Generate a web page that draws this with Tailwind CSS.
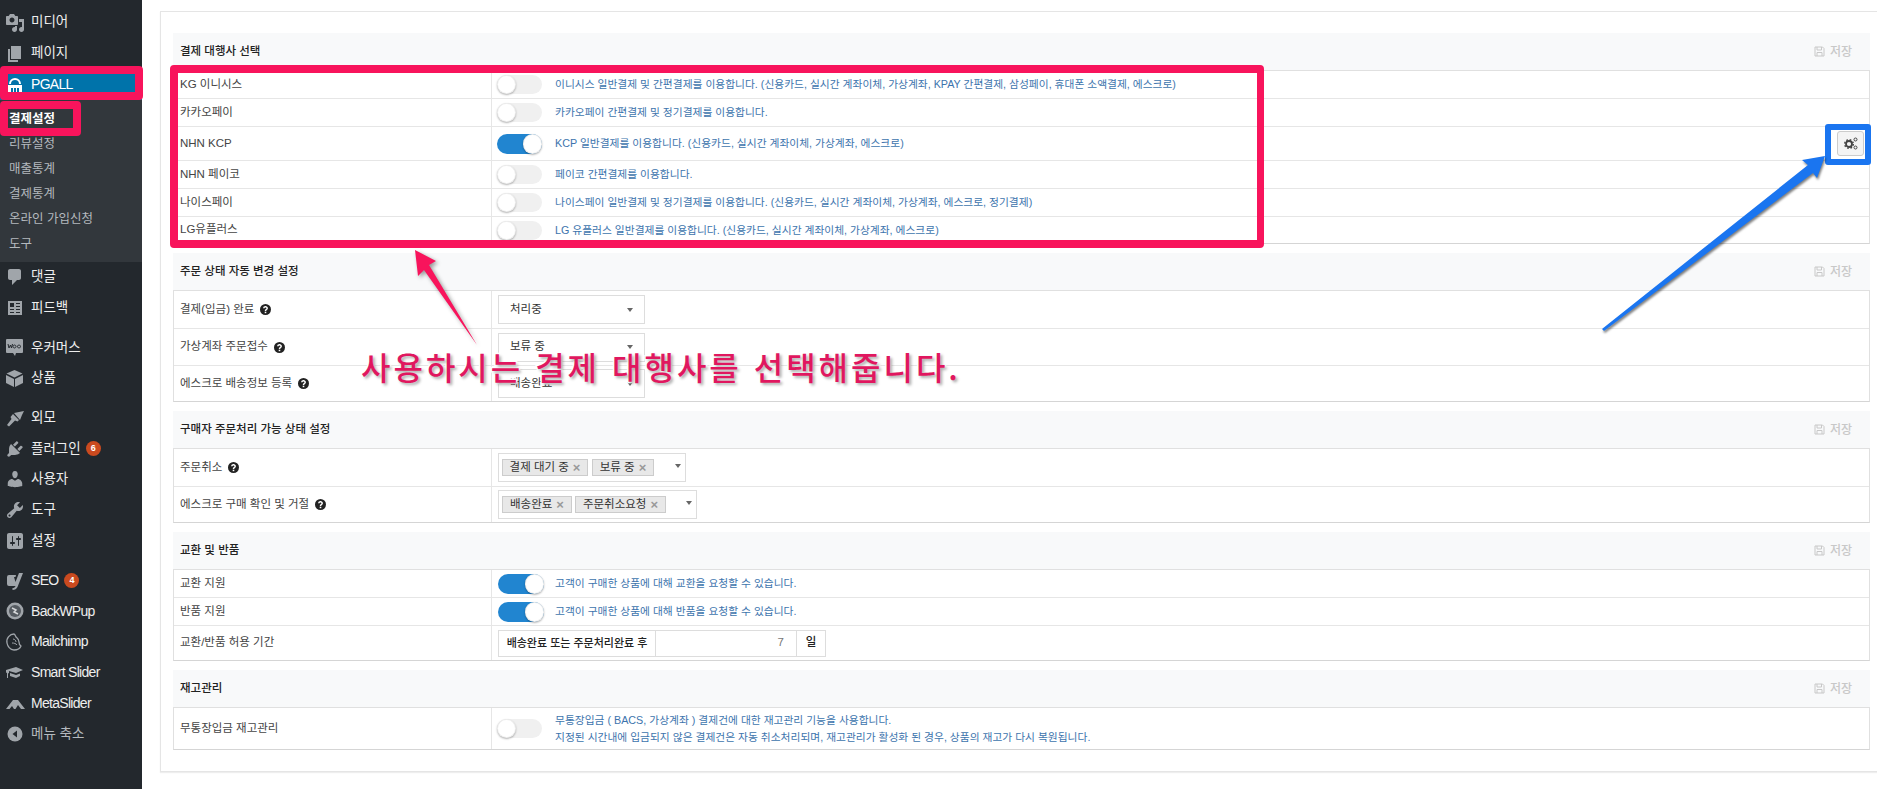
<!DOCTYPE html>
<html lang="ko">

<head>
    <meta charset="UTF-8">
    <title>결제설정 - PGALL</title>
    <script src="https://cdn.jsdelivr.net/npm/@tailwindcss/browser@4"></script>
</head>

<body class="relative h-[789px] overflow-hidden bg-white font-['Liberation_Sans','Noto_Sans_CJK_KR',sans-serif] text-[11.5px] text-[#444]">
    <div class="flex h-full">
        <!-- sidebar -->
        <aside class="w-[142px] shrink-0 bg-[#23282d] pt-[7px] text-[13.5px] text-[#eee]">
            <a class="flex h-[31px] items-center"><svg class="ml-[5px] mr-[6px] h-[20px] w-[20px] fill-[#a0a5aa]" viewBox="0 0 20 20"><path fill-rule="evenodd" d="M13 11V4c0-.55-.45-1-1-1h-1.670L9 1H5L3.670 3H2c-.55 0-1 .45-1 1v7c0 .55.45 1 1 1h10c.55 0 1-.45 1-1zM7 4.500c1.380 0 2.500 1.120 2.500 2.500S8.380 9.500 7 9.500 4.500 8.380 4.500 7 5.620 4.500 7 4.500zM14 6h5v10.500c0 1.380-1.120 2.500-2.500 2.500S14 17.880 14 16.500s1.120-2.500 2.500-2.500c.17 0 .34.020.5.050V9h-3V6zm-4 8.050V13h2v3.500c0 1.380-1.120 2.500-2.500 2.500S7 17.880 7 16.500 8.120 14 9.500 14c.17 0 .34.020.5.050z"/></svg>미디어</a>
            <a class="flex h-[31px] items-center"><svg class="ml-[5px] mr-[6px] h-[20px] w-[20px] fill-[#a0a5aa]" viewBox="0 0 20 20"><path d="M6 15V2h10v13H6zm-1 1h8v2H3V5h2v11z"/></svg>페이지</a>
            <a class="flex h-[31px] items-center bg-[#0073aa] text-[14px] tracking-[-0.7px] text-white"><svg class="ml-[8px] mr-[9px] h-[14px] w-[14px] fill-white" viewBox="0 0 14 14"><path d="M7 0a6 6 0 0 1 6 6h-2a4 4 0 0 0-8 0H1a6 6 0 0 1 6-6zM0 7h14v7h-3v-4H9v4H8v-4H6v4H5v-4H3v4H0z"/></svg>PGALL</a>
            <div class="h-[162px] bg-[#32373c] pt-[7px] text-[12.5px] text-[#b4b9be]">
                <a class="flex h-[25px] items-center pl-[9px] font-bold text-white">결제설정</a>
                <a class="flex h-[25px] items-center pl-[9px]">리뷰설정</a>
                <a class="flex h-[25px] items-center pl-[9px]">매출통계</a>
                <a class="flex h-[25px] items-center pl-[9px]">결제통계</a>
                <a class="flex h-[25px] items-center pl-[9px]">온라인 가입신청</a>
                <a class="flex h-[25px] items-center pl-[9px]">도구</a>
            </div>
            <a class="flex h-[30.700px] items-center"><svg class="ml-[5px] mr-[6px] h-[20px] w-[20px] fill-[#a0a5aa]" viewBox="0 0 20 20"><path d="M5 2h9c1.100 0 2 .9 2 2v7c0 1.100-.9 2-2 2h-2l-5 5v-5H5c-1.100 0-2-.9-2-2V4c0-1.100.9-2 2-2z"/></svg>댓글</a>
            <a class="flex h-[30.700px] items-center"><svg class="ml-[7px] mr-[8px] h-[16px] w-[16px] fill-[#a0a5aa]" viewBox="0 0 16 16"><path fill-rule="evenodd" d="M1 1h14v14H1zM3 3v4h4V3zM9 3v1h4V3zM9 6v1h4V6zM3 9v1h4V9zM9 9v1h4V9zM3 12v1h4v-1zM9 12v1h4v-1z"/></svg>피드백</a>
            <a class="mt-[9px] flex h-[30.700px] items-center"><svg class="ml-[5px] mr-[7px] h-[19px] w-[19px]" viewBox="0 0 19 19"><path fill="#a0a5aa" d="M2 1h15a1 1 0 0 1 1 1v12a1 1 0 0 1-1 1h-6l-1 3-2-3H2a1 1 0 0 1-1-1V2a1 1 0 0 1 1-1z"/><path fill="none" stroke="#23282d" d="M3 6l1 4 1.500-3 1 3 1-4M9.500 7a1.500 1.500 0 1 0 .01 0M14 7a1.500 1.500 0 1 0 .01 0"/></svg>우커머스</a>
            <a class="flex h-[30.700px] items-center"><svg class="ml-[5px] mr-[7px] h-[19px] w-[19px] fill-[#a0a5aa]" viewBox="0 0 19 19"><path d="M9.500 1l8 3.500-8 4-8-4z"/><path d="M1 6l8 4v8l-8-4zM18 6l-8 4v8l8-4z"/></svg>상품</a>
            <a class="mt-[9px] flex h-[30.700px] items-center"><svg class="ml-[6px] mr-[7px] h-[18px] w-[18px] fill-[#a0a5aa]" viewBox="0 0 18 18"><path d="M8 4l5-1 5-1-2 4-2 5z"/><path d="M7 5l6 6-1.500 1.500L9 11.500 7.500 13 3 17.500 1 16 4 12l1.500-2L4.500 8z"/></svg>외모</a>
            <a class="flex h-[30.700px] items-center"><svg class="ml-[5px] mr-[6px] h-[20px] w-[20px] fill-[#a0a5aa]" viewBox="0 0 20 20"><path d="M13.110 4.360L9.870 7.600 8 5.730l3.240-3.240c.35-.34 1.050-.2 1.560.32.52.51.66 1.210.31 1.550zm-8 1.770l.91-1.120 9.010 9.010-1.190.84c-.71.71-2.630 1.160-3.820 1.160H6.140L4.900 17.260c-.59.59-1.540.59-2.120 0-.59-.58-.59-1.530 0-2.120l1.240-1.240v-3.880c0-1.130.4-3.190 1.090-3.890zm7.260 3.970l3.240-3.240c.34-.35 1.040-.21 1.550.31.52.51.66 1.210.31 1.550l-3.240 3.250z"/></svg>플러그인<span class="ml-[5px] flex h-[15px] w-[15px] items-center justify-center rounded-full bg-[#ca4a1f] text-[9px] font-bold text-white">6</span></a>
            <a class="flex h-[30.700px] items-center"><svg class="ml-[5px] mr-[6px] h-[20px] w-[20px] fill-[#a0a5aa]" viewBox="0 0 20 20"><path d="M10 9.250c-2.270 0-2.730-3.440-2.730-3.440C7 4.020 7.820 2 9.970 2c2.160 0 2.980 2.020 2.710 3.810 0 0-.41 3.440-2.680 3.440zm0 2.570L12.720 10c2.390 0 4.520 2.330 4.520 4.530v2.490s-3.650 1.130-7.240 1.130c-3.650 0-7.240-1.130-7.240-1.130v-2.490c0-2.250 1.940-4.480 4.470-4.480z"/></svg>사용자</a>
            <a class="flex h-[30.700px] items-center"><svg class="ml-[5px] mr-[6px] h-[20px] w-[20px] fill-[#a0a5aa]" viewBox="0 0 20 20"><path fill-rule="evenodd" d="M16.680 9.770c-1.340 1.340-3.300 1.670-4.950.99l-5.410 6.520c-.99.99-2.590.99-3.580 0s-.99-2.590 0-3.570l6.520-5.420c-.68-1.650-.35-3.610.99-4.950 1.280-1.280 3.120-1.620 4.720-1.060l-2.890 2.890 2.820 2.820 2.860-2.870c.53 1.580.18 3.390-1.080 4.670zM3.810 16.210c.4.39 1.040.39 1.430 0 .4-.4.4-1.040 0-1.430-.39-.4-1.030-.4-1.430 0-.39.39-.39 1.030 0 1.430z"/></svg>도구</a>
            <a class="flex h-[30.700px] items-center"><svg class="ml-[5px] mr-[6px] h-[20px] w-[20px] fill-[#a0a5aa]" viewBox="0 0 20 20"><path fill-rule="evenodd" d="M18 16V4c0-1.100-.9-2-2-2H4c-1.100 0-2 .9-2 2v12c0 1.100.9 2 2 2h12c1.100 0 2-.9 2-2zM8 11h1c.55 0 1 .45 1 1s-.45 1-1 1H8v1.500c0 .28-.22.5-.5.5s-.5-.22-.5-.5V13H6c-.55 0-1-.45-1-1s.45-1 1-1h1V5.500c0-.28.22-.5.5-.5s.5.22.5.5V11zm5-2h-1c-.55 0-1-.45-1-1s.45-1 1-1h1V5.500c0-.28.22-.5.5-.5s.5.22.5.5V7h1c.55 0 1 .45 1 1s-.45 1-1 1h-1v5.500c0 .28-.22.5-.5.5s-.5-.22-.5-.5V9z"/></svg>설정</a>
            <a class="mt-[9px] flex h-[30.700px] items-center text-[14px] tracking-[-0.7px]"><svg class="ml-[6px] mr-[7px] h-[18px] w-[18px] fill-[#a0a5aa]" viewBox="0 0 18 18"><path d="M3 3h7l-.5 2H8l1.500 5L13 1h4l-5.500 14c-1 2-2.500 3-5 3v-2c1.500 0 2.500-.5 3-2H3a2 2 0 0 1-2-2V5a2 2 0 0 1 2-2z"/></svg>SEO<span class="ml-[6px] flex h-[15px] w-[15px] items-center justify-center rounded-full bg-[#ca4a1f] text-[9px] font-bold tracking-normal text-white">4</span></a>
            <a class="flex h-[30.700px] items-center text-[14px] tracking-[-0.7px]"><svg class="ml-[6px] mr-[7px] h-[18px] w-[18px]" viewBox="0 0 18 18"><circle cx="9" cy="9" r="8.500" fill="#a0a5aa"/><circle cx="9" cy="9" r="6" fill="#555b61"/><path fill="none" stroke="#d5d7d9" stroke-width="1.500" d="M6 6l4 2-2 2 4 2"/></svg>BackWPup</a>
            <a class="flex h-[30.700px] items-center text-[14px] tracking-[-0.7px]"><svg class="ml-[5px] mr-[8px] h-[18px] w-[18px] fill-none stroke-[#a0a5aa]" viewBox="0 0 18 18"><path stroke-width="1.300" d="M9 1C5 1 1 5 2 10c.5 3 3 7 7 7 3 0 6-1.500 7-4-1-.5-2-2-2-4 0-3-2-4-3-5-.5-1-1-3-2-3z"/><path d="M8 6c2 0 3 2 3 3M7 10c2 0 4 .5 5 2"/></svg>Mailchimp</a>
            <a class="flex h-[30.700px] items-center text-[14px] tracking-[-0.7px]"><svg class="ml-[5px] mr-[7px] h-[19px] w-[19px] fill-[#a0a5aa]" viewBox="0 0 19 19"><path d="M1 7l10-3 7 3-7 3-7-2v2l-1 .5V15H2v-5l-1-.5z"/><path d="M5 10l6 2 4-1.500V13l-4 2-6-2z"/></svg>Smart Slider</a>
            <a class="flex h-[30.700px] items-center text-[14px] tracking-[-0.7px]"><svg class="ml-[6px] mr-[6px] h-[19px] w-[19px] fill-[#a0a5aa]" viewBox="0 0 19 19"><path d="M0 15L7 6h5l7 9h-4l-3-4-2.500 4H8l-2-3-2.500 3z"/></svg>MetaSlider</a>
            <a class="flex h-[30.700px] items-center text-[#b4b9be]"><svg class="ml-[7px] mr-[8px] h-[16px] w-[16px]" viewBox="0 0 16 16"><circle cx="8" cy="8" r="7.500" fill="#a0a5aa"/><path fill="#23282d" d="M10 4.500v7L5.500 8z"/></svg>메뉴 축소</a>
        </aside>

        <!-- content -->
        <main class="flex-1 pl-[18px] pt-[11px]">
            <div class="h-[761px] border border-r-0 border-[#e5e5e5] pl-[12px] pr-[7px] pt-[21px] shadow-[0_1px_1px_#eee]">

                <!-- 결제 대행사 선택 -->
                <section class="mb-[9px]">
                    <div class="flex h-[37px] items-center justify-between bg-[#f8f9fa] pl-[7px] font-medium text-[#222]">
                        <span>결제 대행사 선택</span>
                        <span class="mr-[6px] flex h-[29px] w-[62px] items-center justify-center gap-[5px] text-[12px] text-[#c8c8c8]"><svg class="h-[11px] w-[11px] fill-none stroke-[#c8c8c8]" viewBox="0 0 11 11"><path d="M1 1h7.500L10 2.500V10H1zM3 1v3h4.500V1M3 10V6.500h5V10"/></svg>저장</span>
                    </div>
                    <div class="border border-[#e0e0e0] border-b-[#d5d5d5]">
                        <div class="flex h-[28px] border-b border-[#e6e6e6]">
                            <div class="flex w-[318px] items-center border-r border-[#e6e6e6] pl-[6px]">KG 이니시스</div>
                            <div class="flex flex-1 items-center pl-[5px]">
                                <span class="relative h-[19px] w-[45px] rounded-full bg-[#f0f0f0]"><span class="absolute top-0 left-0 h-[19px] w-[19px] rounded-full bg-white shadow-[0_1px_2px_#0000004d,inset_0_0_0_1px_#00000012]"></span></span>
                                <span class="ml-[13px] text-[10.75px] text-[#3d74ad]">이니시스 일반결제 및 간편결제를 이용합니다. (신용카드, 실시간 계좌이체, 가상계좌, KPAY 간편결제, 삼성페이, 휴대폰 소액결제, 에스크로)</span>
                            </div>
                        </div>
                        <div class="flex h-[28px] border-b border-[#e6e6e6]">
                            <div class="flex w-[318px] items-center border-r border-[#e6e6e6] pl-[6px]">카카오페이</div>
                            <div class="flex flex-1 items-center pl-[5px]">
                                <span class="relative h-[19px] w-[45px] rounded-full bg-[#f0f0f0]"><span class="absolute top-0 left-0 h-[19px] w-[19px] rounded-full bg-white shadow-[0_1px_2px_#0000004d,inset_0_0_0_1px_#00000012]"></span></span>
                                <span class="ml-[13px] text-[10.75px] text-[#3d74ad]">카카오페이 간편결제 및 정기결제를 이용합니다.</span>
                            </div>
                        </div>
                        <div class="flex h-[34px] border-b border-[#e6e6e6]">
                            <div class="flex w-[318px] items-center border-r border-[#e6e6e6] pl-[6px]">NHN KCP</div>
                            <div class="flex flex-1 items-center pl-[5px]">
                                <span class="relative h-[20px] w-[45px] rounded-full bg-[#2185d0]"><span class="absolute top-0 right-0 h-[20px] w-[19px] rounded-full bg-white shadow-[0_1px_2px_#0000004d,inset_0_0_0_1px_#00000012]"></span></span>
                                <span class="ml-[13px] text-[10.75px] text-[#3d74ad]">KCP 일반결제를 이용합니다. (신용카드, 실시간 계좌이체, 가상계좌, 에스크로)</span>
                                <button class="mr-[5px] ml-auto flex h-[25px] w-[27px] items-center justify-center rounded-[3px] border border-[#ccc] bg-[#f4f4f4]"><svg class="h-[13px] w-[14px] fill-none stroke-[#444]" viewBox="0 0 14 13"><circle cx="5" cy="7" r="3" stroke-width="1.800"/><circle cx="5" cy="7" r="4.300" stroke-width="1.400" stroke-dasharray="1.700 1.700"/><circle cx="11.500" cy="2.500" r="1.500"/><circle cx="11.500" cy="10.500" r="1.500"/></svg></button>
                            </div>
                        </div>
                        <div class="flex h-[28px] border-b border-[#e6e6e6]">
                            <div class="flex w-[318px] items-center border-r border-[#e6e6e6] pl-[6px]">NHN 페이코</div>
                            <div class="flex flex-1 items-center pl-[5px]">
                                <span class="relative h-[19px] w-[45px] rounded-full bg-[#f0f0f0]"><span class="absolute top-0 left-0 h-[19px] w-[19px] rounded-full bg-white shadow-[0_1px_2px_#0000004d,inset_0_0_0_1px_#00000012]"></span></span>
                                <span class="ml-[13px] text-[10.75px] text-[#3d74ad]">페이코 간편결제를 이용합니다.</span>
                            </div>
                        </div>
                        <div class="flex h-[28px] border-b border-[#e6e6e6]">
                            <div class="flex w-[318px] items-center border-r border-[#e6e6e6] pl-[6px]">나이스페이</div>
                            <div class="flex flex-1 items-center pl-[5px]">
                                <span class="relative h-[19px] w-[45px] rounded-full bg-[#f0f0f0]"><span class="absolute top-0 left-0 h-[19px] w-[19px] rounded-full bg-white shadow-[0_1px_2px_#0000004d,inset_0_0_0_1px_#00000012]"></span></span>
                                <span class="ml-[13px] text-[10.75px] text-[#3d74ad]">나이스페이 일반결제 및 정기결제를 이용합니다. (신용카드, 실시간 계좌이체, 가상계좌, 에스크로, 정기결제)</span>
                            </div>
                        </div>
                        <div class="flex h-[26px]">
                            <div class="flex w-[318px] items-center border-r border-[#e6e6e6] pl-[6px]">LG유플러스</div>
                            <div class="flex flex-1 items-center pl-[5px]">
                                <span class="relative h-[19px] w-[45px] rounded-full bg-[#f0f0f0]"><span class="absolute top-0 left-0 h-[19px] w-[19px] rounded-full bg-white shadow-[0_1px_2px_#0000004d,inset_0_0_0_1px_#00000012]"></span></span>
                                <span class="ml-[13px] text-[10.75px] text-[#3d74ad]">LG 유플러스 일반결제를 이용합니다. (신용카드, 실시간 계좌이체, 가상계좌, 에스크로)</span>
                            </div>
                        </div>
                    </div>
                </section>

                <!-- 주문 상태 자동 변경 설정 -->
                <section class="mb-[9px]">
                    <div class="flex h-[37px] items-center justify-between bg-[#f8f9fa] pl-[7px] font-medium text-[#222]">
                        <span>주문 상태 자동 변경 설정</span>
                        <span class="mr-[6px] flex h-[29px] w-[62px] items-center justify-center gap-[5px] text-[12px] text-[#c8c8c8]"><svg class="h-[11px] w-[11px] fill-none stroke-[#c8c8c8]" viewBox="0 0 11 11"><path d="M1 1h7.500L10 2.500V10H1zM3 1v3h4.500V1M3 10V6.500h5V10"/></svg>저장</span>
                    </div>
                    <div class="border border-[#e0e0e0] border-b-[#d5d5d5]">
                        <div class="flex h-[38px] border-b border-[#e6e6e6]">
                            <div class="flex w-[318px] items-center border-r border-[#e6e6e6] pl-[6px]">결제(입금) 완료<svg class="ml-[6px] h-[11px] w-[11px]" viewBox="0 0 11 11"><circle cx="5.500" cy="5.500" r="5.500" fill="#222"/><path fill="none" stroke="#fff" stroke-width="1.500" d="M3.800 4.300a1.700 1.500 0 1 1 2.500 1.300c-.6.3-.8.6-.8 1.300"/><path fill="#fff" d="M4.700 7.700h1.600v1.500H4.700z"/></svg></div>
                            <div class="flex flex-1 items-center pl-[6px]">
                                <span class="flex h-[29px] w-[147px] items-center justify-between border border-[#ddd] px-[11px] text-[#333]">처리중<span class="h-0 w-0 border-x-[3.500px] border-t-[4px] border-x-transparent border-t-[#666]"></span></span>
                            </div>
                        </div>
                        <div class="flex h-[37px] border-b border-[#e6e6e6]">
                            <div class="flex w-[318px] items-center border-r border-[#e6e6e6] pl-[6px]">가상계좌 주문접수<svg class="ml-[6px] h-[11px] w-[11px]" viewBox="0 0 11 11"><circle cx="5.500" cy="5.500" r="5.500" fill="#222"/><path fill="none" stroke="#fff" stroke-width="1.500" d="M3.800 4.300a1.700 1.500 0 1 1 2.500 1.300c-.6.3-.8.6-.8 1.300"/><path fill="#fff" d="M4.700 7.700h1.600v1.500H4.700z"/></svg></div>
                            <div class="flex flex-1 items-center pl-[6px]">
                                <span class="flex h-[29px] w-[147px] items-center justify-between border border-[#ddd] px-[11px] text-[#333]">보류 중<span class="h-0 w-0 border-x-[3.500px] border-t-[4px] border-x-transparent border-t-[#666]"></span></span>
                            </div>
                        </div>
                        <div class="flex h-[35px]">
                            <div class="flex w-[318px] items-center border-r border-[#e6e6e6] pl-[6px]">에스크로 배송정보 등록<svg class="ml-[6px] h-[11px] w-[11px]" viewBox="0 0 11 11"><circle cx="5.500" cy="5.500" r="5.500" fill="#222"/><path fill="none" stroke="#fff" stroke-width="1.500" d="M3.800 4.300a1.700 1.500 0 1 1 2.500 1.300c-.6.3-.8.6-.8 1.300"/><path fill="#fff" d="M4.700 7.700h1.600v1.500H4.700z"/></svg></div>
                            <div class="flex flex-1 items-center pl-[6px]">
                                <span class="flex h-[29px] w-[147px] items-center justify-between border border-[#ddd] px-[11px] text-[#333]">배송완료<span class="h-0 w-0 border-x-[3.500px] border-t-[4px] border-x-transparent border-t-[#666]"></span></span>
                            </div>
                        </div>
                    </div>
                </section>

                <!-- 구매자 주문처리 가능 상태 설정 -->
                <section class="mb-[9px]">
                    <div class="flex h-[37px] items-center justify-between bg-[#f8f9fa] pl-[7px] font-medium text-[#222]">
                        <span>구매자 주문처리 가능 상태 설정</span>
                        <span class="mr-[6px] flex h-[29px] w-[62px] items-center justify-center gap-[5px] text-[12px] text-[#c8c8c8]"><svg class="h-[11px] w-[11px] fill-none stroke-[#c8c8c8]" viewBox="0 0 11 11"><path d="M1 1h7.500L10 2.500V10H1zM3 1v3h4.500V1M3 10V6.500h5V10"/></svg>저장</span>
                    </div>
                    <div class="border border-[#e0e0e0] border-b-[#d5d5d5]">
                        <div class="flex h-[38px] border-b border-[#e6e6e6]">
                            <div class="flex w-[318px] items-center border-r border-[#e6e6e6] pl-[6px]">주문취소<svg class="ml-[6px] h-[11px] w-[11px]" viewBox="0 0 11 11"><circle cx="5.500" cy="5.500" r="5.500" fill="#222"/><path fill="none" stroke="#fff" stroke-width="1.500" d="M3.800 4.300a1.700 1.500 0 1 1 2.500 1.300c-.6.3-.8.6-.8 1.300"/><path fill="#fff" d="M4.700 7.700h1.600v1.500H4.700z"/></svg></div>
                            <div class="flex flex-1 items-center pl-[6px]">
                                <span class="flex h-[29px] w-[188px] items-center gap-[4px] border border-[#ddd] pl-[3px] text-[#333]">
                                    <span class="flex h-[17px] w-[86px] shrink-0 items-center justify-center gap-[4px] border border-[#ccc] bg-[#e8e8e8] whitespace-nowrap">결제 대기 중<b class="text-[13px] text-[#999]">×</b></span>
                                    <span class="flex h-[17px] w-[62px] shrink-0 items-center justify-center gap-[4px] border border-[#ccc] bg-[#e8e8e8] whitespace-nowrap">보류 중<b class="text-[13px] text-[#999]">×</b></span>
                                    <span class="mb-[3px] ml-[17px] h-0 w-0 border-x-[3.500px] border-t-[4px] border-x-transparent border-t-[#666]"></span>
                                </span>
                            </div>
                        </div>
                        <div class="flex h-[35px]">
                            <div class="flex w-[318px] items-center border-r border-[#e6e6e6] pl-[6px]">에스크로 구매 확인 및 거절<svg class="ml-[6px] h-[11px] w-[11px]" viewBox="0 0 11 11"><circle cx="5.500" cy="5.500" r="5.500" fill="#222"/><path fill="none" stroke="#fff" stroke-width="1.500" d="M3.800 4.300a1.700 1.500 0 1 1 2.500 1.300c-.6.3-.8.6-.8 1.300"/><path fill="#fff" d="M4.700 7.700h1.600v1.500H4.700z"/></svg></div>
                            <div class="flex flex-1 items-center pl-[6px]">
                                <span class="flex h-[29px] w-[199px] items-center gap-[3px] border border-[#ddd] pl-[3px] text-[#333]">
                                    <span class="flex h-[17px] w-[70px] shrink-0 items-center justify-center gap-[4px] border border-[#ccc] bg-[#e8e8e8] whitespace-nowrap">배송완료<b class="text-[13px] text-[#999]">×</b></span>
                                    <span class="flex h-[17px] w-[91px] shrink-0 items-center justify-center gap-[4px] border border-[#ccc] bg-[#e8e8e8] whitespace-nowrap">주문취소요청<b class="text-[13px] text-[#999]">×</b></span>
                                    <span class="mb-[3px] ml-[17px] h-0 w-0 border-x-[3.500px] border-t-[4px] border-x-transparent border-t-[#666]"></span>
                                </span>
                            </div>
                        </div>
                    </div>
                </section>

                <!-- 교환 및 반품 -->
                <section class="mb-[9px]">
                    <div class="flex h-[37px] items-center justify-between bg-[#f8f9fa] pl-[7px] font-medium text-[#222]">
                        <span>교환 및 반품</span>
                        <span class="mr-[6px] flex h-[29px] w-[62px] items-center justify-center gap-[5px] text-[12px] text-[#c8c8c8]"><svg class="h-[11px] w-[11px] fill-none stroke-[#c8c8c8]" viewBox="0 0 11 11"><path d="M1 1h7.500L10 2.500V10H1zM3 1v3h4.500V1M3 10V6.500h5V10"/></svg>저장</span>
                    </div>
                    <div class="border border-[#e0e0e0] border-b-[#d5d5d5]">
                        <div class="flex h-[28px] border-b border-[#e6e6e6]">
                            <div class="flex w-[318px] items-center border-r border-[#e6e6e6] pl-[6px]">교환 지원</div>
                            <div class="flex flex-1 items-center pl-[6px]">
                                <span class="relative h-[20px] w-[46px] rounded-full bg-[#2185d0]"><span class="absolute top-0 right-0 h-[20px] w-[19px] rounded-full bg-white shadow-[0_1px_2px_#0000004d,inset_0_0_0_1px_#00000012]"></span></span>
                                <span class="ml-[11px] text-[10.75px] text-[#3d74ad]">고객이 구매한 상품에 대해 교환을 요청할 수 있습니다.</span>
                            </div>
                        </div>
                        <div class="flex h-[28px] border-b border-[#e6e6e6]">
                            <div class="flex w-[318px] items-center border-r border-[#e6e6e6] pl-[6px]">반품 지원</div>
                            <div class="flex flex-1 items-center pl-[6px]">
                                <span class="relative h-[20px] w-[46px] rounded-full bg-[#2185d0]"><span class="absolute top-0 right-0 h-[20px] w-[19px] rounded-full bg-white shadow-[0_1px_2px_#0000004d,inset_0_0_0_1px_#00000012]"></span></span>
                                <span class="ml-[11px] text-[10.75px] text-[#3d74ad]">고객이 구매한 상품에 대해 반품을 요청할 수 있습니다.</span>
                            </div>
                        </div>
                        <div class="flex h-[34px]">
                            <div class="flex w-[318px] items-center border-r border-[#e6e6e6] pl-[6px]">교환/반품 허용 기간</div>
                            <div class="flex flex-1 items-center pl-[6px]">
                                <div class="flex h-[27px] w-[328px] border border-[#ddd] text-[#222]">
                                    <span class="flex w-[157px] items-center justify-center border-r border-[#ddd] text-[11px] font-medium">배송완료 또는 주문처리완료 후</span>
                                    <span class="flex flex-1 items-center justify-end border-r border-[#ddd] pr-[12px] text-[#777]">7</span>
                                    <span class="flex w-[28px] items-center justify-center font-medium">일</span>
                                </div>
                            </div>
                        </div>
                    </div>
                </section>

                <!-- 재고관리 -->
                <section>
                    <div class="flex h-[37px] items-center justify-between bg-[#f8f9fa] pl-[7px] font-medium text-[#222]">
                        <span>재고관리</span>
                        <span class="mr-[6px] flex h-[29px] w-[62px] items-center justify-center gap-[5px] text-[12px] text-[#c8c8c8]"><svg class="h-[11px] w-[11px] fill-none stroke-[#c8c8c8]" viewBox="0 0 11 11"><path d="M1 1h7.500L10 2.500V10H1zM3 1v3h4.500V1M3 10V6.500h5V10"/></svg>저장</span>
                    </div>
                    <div class="border border-[#e0e0e0] border-b-[#d5d5d5]">
                        <div class="flex h-[41px]">
                            <div class="flex w-[318px] items-center border-r border-[#e6e6e6] pl-[6px]">무통장입금 재고관리</div>
                            <div class="flex flex-1 items-center pl-[5px]">
                                <span class="relative h-[19px] w-[45px] rounded-full bg-[#f0f0f0]"><span class="absolute top-0 left-0 h-[19px] w-[19px] rounded-full bg-white shadow-[0_1px_2px_#0000004d,inset_0_0_0_1px_#00000012]"></span></span>
                                <div class="ml-[13px] text-[10.75px] leading-[17px] text-[#3d74ad]">
                                    <p>무통장입금 ( BACS, 가상계좌 ) 결제건에 대한 재고관리 기능을 사용합니다.</p>
                                    <p>지정된 시간내에 입금되지 않은 결제건은 자동 취소처리되며, 재고관리가 활성화 된 경우, 상품의 재고가 다시 복원됩니다.</p>
                                </div>
                            </div>
                        </div>
                    </div>
                </section>
            </div>
        </main>
    </div>

    <!-- annotations over the screenshot -->
    <div class="absolute top-[66px] left-0 h-[34px] w-[143px] rounded-[4px] border-[8px] border-[#f8145c]"></div>
    <div class="absolute top-[101px] left-0 h-[35px] w-[81px] rounded-[4px] border-[8px] border-[#f8145c]"></div>
    <div class="absolute top-[65px] left-[170px] h-[183px] w-[1094px] rounded-[4px] border-[8px] border-r-[7px] border-[#f8145c]"></div>
    <div class="absolute top-[124px] left-[1825px] h-[41px] w-[46px] rounded-[3px] border-[6px] border-[#1a75f0]"></div>

    <svg class="pointer-events-none absolute inset-0 h-[789px] w-[1877px]" viewBox="0 0 1877 789">
        <path class="drop-shadow-[2px_2px_2px_#00000066]" fill="#f8145c" d="M415 250l21 11-7 4 48 80-53-75-6 6z"/>
        <path class="drop-shadow-[1px_2px_1px_#00000080]" fill="#1a75f0" d="M1825 156l-8 22-4-5-209 158-2-2 206-164-6-5z"/>
    </svg>

    <div class="absolute top-[344px] left-[361px] whitespace-nowrap font-['Noto_Sans_CJK_KR',sans-serif] text-[32px] leading-[44px] font-medium tracking-[3px] text-[#e0175f] [paint-order:stroke_fill] [-webkit-text-stroke:3px_white] [text-shadow:2px_2px_3px_#00000055]">사용하시는 결제 대행사를 선택해줍니다.</div>
</body>

</html>
